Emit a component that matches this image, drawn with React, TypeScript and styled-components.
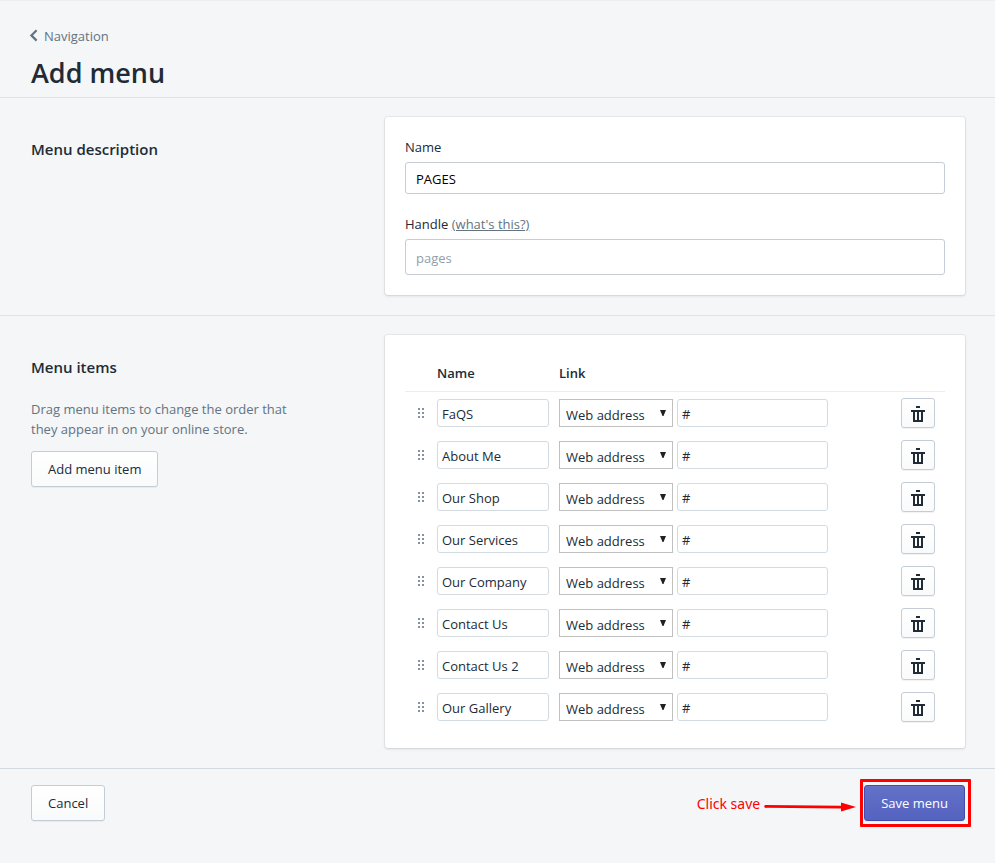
import React from "react";
import styled, { createGlobalStyle, css } from "styled-components";

const GlobalStyle = createGlobalStyle`
  *, *::before, *::after { box-sizing: border-box; }
  body {
    margin: 0;
    background: #f4f6f8;
    color: #212b36;
    font: 400 13px/20px "Open Sans", "Noto Sans", sans-serif;
  }
  button, input, select { font: inherit; color: inherit; margin: 0; }
  h1, h2, p { margin: 0; }
`;

const Page = styled.main`
  border-top: 1px solid #eceff2;
`;

const Header = styled.header`
  padding: 25px 30px 6px 31px;
  border-bottom: 1px solid #dfe3e8;
`;

const Breadcrumb = styled.a`
  display: flex;
  align-items: center;
  gap: 6px;
  width: fit-content;
  margin-left: -2px;
  color: #637381;
  text-decoration: none;
`;

const Title = styled.h1`
  margin-top: 9px;
  font-size: 27px;
  line-height: 36px;
  font-weight: 600;
`;

const Section = styled.section`
  display: grid;
  grid-template-columns: minmax(240px, 334fr) minmax(0, 580fr);
  gap: 20px;
  padding: 19px 30px 20px 31px;
  border-bottom: 1px solid ${(p: { $tone?: string }) => p.$tone ?? "#dfe3e8"};
`;

const Intro = styled.div`
  padding-top: 20px;
`;

const SectionTitle = styled.h2`
  font-size: 15px;
  line-height: 24px;
  font-weight: 600;
`;

const Hint = styled.p`
  max-width: 272px;
  margin: 20px 0 12px;
  color: #637381;
`;

const Card = styled.div`
  padding: 20px;
  background: #fff;
  border-radius: 3px;
  box-shadow: 0 0 0 1px rgba(63, 63, 68, 0.06), 0 1px 3px rgba(63, 63, 68, 0.16);
`;

const Field = styled.div`
  & + & { margin-top: 20px; }
`;

const Label = styled.label`
  display: inline-block;
  margin-bottom: 5px;
`;

const HelpLink = styled.a`
  color: #637381;
  text-decoration: underline;
`;

const TextInput = styled.input<{ $size: "regular" | "tall" }>`
  display: block;
  width: 100%;
  height: ${(p) => (p.$size === "tall" ? 36 : 32)}px;
  padding: 2px 10px 0;
  border: 1px solid #c4cdd5;
  border-radius: 3px;
  background: #fff;
  color: #000;
  &::placeholder { color: #919eab; opacity: 1; }
`;

const ItemTable = styled.table`
  width: 100%;
  border-collapse: separate;
  border-spacing: 0;
  table-layout: fixed;
`;

const HeadCell = styled.th<{ $width?: number }>`
  width: ${(p) => (p.$width ? `${p.$width}px` : "auto")};
  height: 37px;
  padding: 0;
  border-bottom: 1px solid #ebeef0;
  text-align: left;
  font-weight: 600;
`;

const Cell = styled.td<{ $align?: "center" | "right" }>`
  height: 42px;
  padding: 0;
  text-align: ${(p) => p.$align ?? "left"};
  vertical-align: middle;
`;

const Handle = styled.button`
  display: flex;
  align-items: center;
  justify-content: center;
  width: 32px;
  height: 28px;
  padding: 0;
  border: 0;
  background: none;
  cursor: move;
`;

const compact = css`
  display: block;
  height: 28px;
  background: #fff;
`;

const ItemInput = styled.input<{ $width: number }>`
  ${compact}
  width: ${(p) => p.$width}px;
  padding: 2px 4px 0;
  border: 1px solid #d3dbe2;
  border-radius: 3px;
`;

const LinkGroup = styled.div`
  display: flex;
  gap: 4px;
`;

const SelectBox = styled.div`
  position: relative;
  width: 114px;
`;

const Select = styled.select`
  ${compact}
  width: 100%;
  padding: 4px 20px 0 6px;
  border: 1px solid #c0c0c0;
  border-radius: 0;
  appearance: none;
`;

const Caret = styled.svg`
  position: absolute;
  top: 11px;
  right: 7px;
  pointer-events: none;
`;

const buttonBase = css`
  border: 1px solid #c4cdd5;
  border-radius: 3px;
  background: linear-gradient(to bottom, #fff, #f9fafb);
  box-shadow: 0 1px 0 rgba(22, 29, 37, 0.05);
  cursor: pointer;
`;

const Button = styled.button`
  ${buttonBase}
  height: 36px;
  padding: 0 16px;
`;

const IconButton = styled.button`
  ${buttonBase}
  display: inline-flex;
  align-items: center;
  justify-content: center;
  width: 34px;
  height: 30px;
  margin-right: 10px;
  padding: 2px 0 0;
  vertical-align: top;
`;

const PrimaryButton = styled(Button)`
  border-color: #3f4eae;
  background: linear-gradient(to bottom, #6371c7, #5563c1);
  box-shadow: inset 0 1px 0 #6774c8, 0 1px 0 rgba(22, 29, 37, 0.05);
  color: #fff;
`;

const Footer = styled.footer`
  display: flex;
  align-items: center;
  justify-content: space-between;
  padding: 16px 30px 42px 31px;
`;

const SaveGroup = styled.div`
  display: flex;
  align-items: center;
  gap: 4px;
  color: #f00;
`;

const Highlight = styled.div`
  position: relative;
  margin-left: 4px;
  &::after {
    content: "";
    position: absolute;
    inset: -6px -6px -6px -4px;
    border: 3px solid #f00;
    border-radius: 1px;
    pointer-events: none;
  }
`;

const Note = styled.span`
  padding-top: 2px;
  font-family: "Noto Sans", sans-serif;
  font-size: 14px;
`;

const ITEMS = [
  "FaQS",
  "About Me",
  "Our Shop",
  "Our Services",
  "Our Company",
  "Contact Us",
  "Contact Us 2",
  "Our Gallery",
];

const ChevronLeft = () => (
  <svg width="9" height="14" viewBox="0 0 9 14" fill="none" aria-hidden="true">
    <path d="M7.6 1.2 2.4 6.4l5.2 5.2" stroke="#637381" strokeWidth="2.2" />
  </svg>
);

const DragDots = () => (
  <svg width="6" height="10" viewBox="0 0 6 10" fill="#8592a3" aria-hidden="true">
    {[0, 4, 8].map((y) => (
      <React.Fragment key={y}>
        <rect x="0" y={y} width="2" height="2" />
        <rect x="4" y={y} width="2" height="2" />
      </React.Fragment>
    ))}
  </svg>
);

const Trash = () => (
  <svg width="14" height="16" viewBox="0 0 14 16" fill="#212b36" aria-hidden="true">
    <path d="M5 0h4v2H5zM0 4h14v2h-2v10H2V6H0zM4 6v8h2V6zM8 6v8h2V6z" fillRule="evenodd" />
  </svg>
);

const Arrow = () => (
  <svg width="92" height="18" viewBox="0 0 92 18" fill="#f00" aria-hidden="true">
    <path d="M1.5 11 77 11.7V8.5L92 13l-15 4.5V14.5L1.5 13.8Z" />
    <circle cx="1.7" cy="12.4" r="1.4" />
  </svg>
);

function ItemRow({ name }: { name: string }) {
  return (
    <tr>
      <Cell>
        <Handle type="button" aria-label={`Move ${name}`}>
          <DragDots />
        </Handle>
      </Cell>
      <Cell>
        <ItemInput $width={112} aria-label="Name" defaultValue={name} />
      </Cell>
      <Cell>
        <LinkGroup>
          <SelectBox>
            <Select aria-label="Link type" defaultValue="web">
              <option value="web">Web address</option>
            </Select>
            <Caret width="6" height="6" viewBox="0 0 6 6" fill="#212121" aria-hidden="true">
              <path d="M0 0h6L3.5 6h-1z" />
            </Caret>
          </SelectBox>
          <ItemInput $width={151} aria-label="Link" defaultValue="#" />
        </LinkGroup>
      </Cell>
      <Cell $align="right">
        <IconButton type="button" aria-label={`Delete ${name}`}>
          <Trash />
        </IconButton>
      </Cell>
    </tr>
  );
}

export default function App() {
  return (
    <>
      <GlobalStyle />
      <Page>
        <Header>
          <Breadcrumb href="#navigation">
            <ChevronLeft />
            Navigation
          </Breadcrumb>
          <Title>Add menu</Title>
        </Header>

        <Section>
          <Intro>
            <SectionTitle>Menu description</SectionTitle>
          </Intro>
          <Card>
            <Field>
              <Label htmlFor="menu-name">Name</Label>
              <TextInput id="menu-name" $size="regular" defaultValue="PAGES" />
            </Field>
            <Field>
              <Label htmlFor="menu-handle">Handle</Label>{" "}
              <HelpLink href="#handle">(what's this?)</HelpLink>
              <TextInput id="menu-handle" $size="tall" placeholder="pages" />
            </Field>
          </Card>
        </Section>

        <Section $tone="#d3dbe2">
          <Intro>
            <SectionTitle>Menu items</SectionTitle>
            <Hint>Drag menu items to change the order that they appear in on your online store.</Hint>
            <Button type="button">Add menu item</Button>
          </Intro>
          <Card>
            <ItemTable>
              <thead>
                <tr>
                  <HeadCell $width={32} aria-label="Order" />
                  <HeadCell $width={122} scope="col">Name</HeadCell>
                  <HeadCell scope="col">Link</HeadCell>
                  <HeadCell $width={54} aria-label="Actions" />
                </tr>
              </thead>
              <tbody>
                {ITEMS.map((name) => (
                  <ItemRow key={name} name={name} />
                ))}
              </tbody>
            </ItemTable>
          </Card>
        </Section>

        <Footer>
          <Button type="button">Cancel</Button>
          <SaveGroup>
            <Note>Click save</Note>
            <Arrow />
            <Highlight>
              <PrimaryButton type="submit">Save menu</PrimaryButton>
            </Highlight>
          </SaveGroup>
        </Footer>
      </Page>
    </>
  );
}
